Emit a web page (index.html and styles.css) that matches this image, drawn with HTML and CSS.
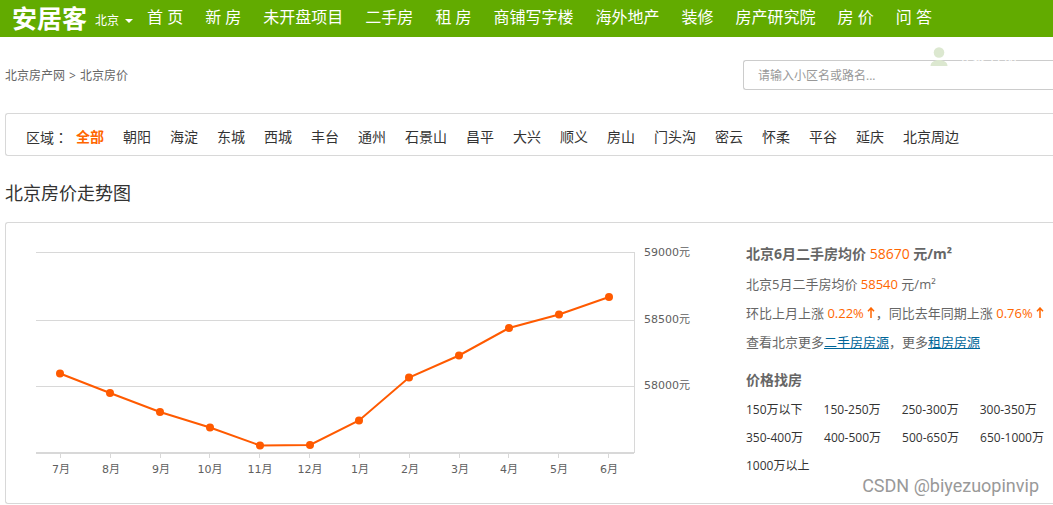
FILE: index.html
```html
<!DOCTYPE html>
<html lang="zh-CN">
<head>
<meta charset="utf-8">
<title>北京房价</title>
<link rel="stylesheet" href="styles.css">
</head>
<body>
<header class="header">
  <a class="logo" href="#">安居客</a>
  <button class="city" type="button">北京<span class="caret"></span></button>
  <nav class="nav">
    <a href="#">首 页</a><a href="#">新 房</a><a href="#">未开盘项目</a><a href="#">二手房</a><a href="#">租 房</a><a href="#">商铺写字楼</a><a href="#">海外地产</a><a href="#">装修</a><a href="#">房产研究院</a><a href="#">房 价</a><a href="#">问 答</a>
  </nav>
</header>
<main class="page">
  <div class="toolbar">
    <div class="crumbs"><a href="#">北京房产网</a><span>&gt;</span><a href="#">北京房价</a></div>
    <form class="search">
      <input class="search-input" type="text" aria-label="搜索小区" placeholder="请输入小区名或路名...">
      <div class="account">
        <svg class="account-icon" viewBox="0 0 18 19" aria-hidden="true"><circle cx="9" cy="5.500" r="5.300"/><path d="M0.500 19C0.500 15.500 4 13 9 13s8.500 2.500 8.500 6z"/></svg>
        <span>登录 注册</span>
      </div>
    </form>
  </div>
  <section class="panel regions">
    <span class="regions-label">区域<span class="colon" lang="zh-TW">：</span></span>
    <a class="active" href="#">全部</a><a href="#">朝阳</a><a href="#">海淀</a><a href="#">东城</a><a href="#">西城</a><a href="#">丰台</a><a href="#">通州</a><a href="#">石景山</a><a href="#">昌平</a><a href="#">大兴</a><a href="#">顺义</a><a href="#">房山</a><a href="#">门头沟</a><a href="#">密云</a><a href="#">怀柔</a><a href="#">平谷</a><a href="#">延庆</a><a href="#">北京周边</a>
  </section>
  <h1 class="title">北京房价走势图</h1>
  <section class="panel trend">
    <svg class="chart" viewBox="0 0 670 240" role="img" aria-label="北京房价走势图">
      <g class="grid">
        <path d="M0 9.500H599M0 77.500H599M0 143.500H599M598.500 10V210"/>
        <path class="axis" d="M0 210H598"/>
        <path d="M24.500 211v4M74.500 211v4M124.500 211v4M173.500 211v4M223.500 211v4M273.500 211v4M323.500 211v4M373.500 211v4M423.500 211v4M472.500 211v4M522.500 211v4M572.500 211v4"/>
      </g>
      <polyline class="line" points="24,130.500 74,150 124,169 174,184.500 224,202.500 274,202 323,177.500 373,134.500 423,112.500 473,85 523,71.500 573,54"/>
      <g class="dots">
        <circle cx="24" cy="130.500" r="4"/><circle cx="74" cy="150" r="4"/><circle cx="124" cy="169" r="4"/><circle cx="174" cy="184.500" r="4"/><circle cx="224" cy="202.500" r="4"/><circle cx="274" cy="202" r="4"/><circle cx="323" cy="177.500" r="4"/><circle cx="373" cy="134.500" r="4"/><circle cx="423" cy="112.500" r="4"/><circle cx="473" cy="85" r="4"/><circle cx="523" cy="71.500" r="4"/><circle cx="573" cy="54" r="4"/>
      </g>
      <g class="label">
        <text x="608" y="13">59000元</text><text x="608" y="80">58500元</text><text x="608" y="146">58000元</text>
      </g>
      <g class="label month">
        <text x="25" y="230">7月</text><text x="75" y="230">8月</text><text x="125" y="230">9月</text><text x="174" y="230">10月</text><text x="224" y="230">11月</text><text x="274" y="230">12月</text><text x="324" y="230">1月</text><text x="374" y="230">2月</text><text x="424" y="230">3月</text><text x="473" y="230">4月</text><text x="523" y="230">5月</text><text x="573" y="230">6月</text>
      </g>
    </svg>
    <div class="summary">
      <h2 class="average">北京6月二手房均价 <em>58670</em> 元/m²</h2>
      <p>北京5月二手房均价 <em>58540</em> 元/m²</p>
      <p>环比上月上涨 <em>0.22%<svg class="arrow" viewBox="0 0 12 11" aria-hidden="true"><path d="M7 11V1M4 4.200L7 1l3 3.200"/></svg></em>，同比去年同期上涨 <em>0.76%<svg class="arrow" viewBox="0 0 12 11" aria-hidden="true"><path d="M7 11V1M4 4.200L7 1l3 3.200"/></svg></em></p>
      <p>查看北京更多<a href="#">二手房房源</a>，更多<a href="#">租房房源</a></p>
      <h2 class="find">价格找房</h2>
      <div class="prices">
        <a href="#">150万以下</a><a href="#">150-250万</a><a href="#">250-300万</a><a href="#">300-350万</a><a href="#">350-400万</a><a href="#">400-500万</a><a href="#">500-650万</a><a href="#">650-1000万</a><a href="#">1000万以上</a>
      </div>
    </div>
    <div class="watermark">CSDN @biyezuopinvip</div>
  </section>
</main>
</body>
</html>
```
FILE: styles.css
```css
* { box-sizing: border-box; }
body {
  margin: 0;
  background: #fff;
  color: #333;
  font: 12px/18px "Open Sans", "Noto Sans CJK SC", sans-serif;
  overflow-x: hidden;
}
a { color: inherit; text-decoration: none; }
h1, h2, p { margin: 0; font-weight: 400; }
em { font-style: normal; color: #f60; font-weight: 400; }

.header {
  display: flex;
  align-items: center;
  height: 37px;
  padding-left: 12px;
  background: #62ab00;
  color: #fff;
  white-space: nowrap;
}
.logo { width: 76px; padding-bottom: 2px; font-size: 25px; line-height: 32px; font-weight: 700; }
.city {
  display: flex;
  align-items: center;
  gap: 6px;
  width: 59px;
  margin-top: 4px;
  padding: 0 0 0 7px;
  border: 0;
  background: none;
  color: inherit;
  font: inherit;
}
.caret {
  border: 4px solid transparent;
  border-top-color: #fff;
  border-bottom: 0;
}
.nav { display: flex; gap: 22px; padding-bottom: 3px; font-size: 16px; line-height: 24px; }

.page { padding-left: 5px; }
.toolbar {
  display: flex;
  justify-content: space-between;
  align-items: center;
  padding-top: 23px;
  color: #666;
}
.crumbs { display: flex; gap: 4px; padding-top: 2px; }
.search { position: relative; width: 310px; }
.search-input {
  display: block;
  width: 100%;
  height: 30px;
  padding: 1px 14px 0;
  border: 1px solid #ccc;
  border-right: 0;
  border-radius: 3px 0 0 3px;
  font: inherit;
  color: #333;
}
.search-input::placeholder { color: #999; opacity: 1; }
.account {
  position: absolute;
  left: 187px;
  top: -13px;
  display: flex;
  gap: 10px;
  color: #fff;
  font-size: 14px;
}
.account-icon { width: 18px; height: 19px; fill: #dce8d0; }

.panel { border: 1px solid #d8d8d8; border-right: 0; border-radius: 3px 0 0 3px; }
.regions {
  display: flex;
  gap: 19px;
  margin-top: 23px;
  padding: 13px 20px 7px;
  font-size: 14px;
  line-height: 20px;
  white-space: nowrap;
}
.regions-label { width: 31px; }
.colon { font-family: "Noto Sans CJK TC", sans-serif; }
.active { color: #f60; font-weight: 700; }
.title { padding: 23px 0 15px; font-size: 18px; line-height: 28px; }

.trend {
  position: relative;
  display: flex;
  gap: 40px;
  padding: 20px 0 20px 30px;
}
.chart { flex: none; width: 670px; height: 240px; }
.grid { fill: none; stroke: #d8d8d8; }
.axis { stroke-width: 2; }
.line { fill: none; stroke: #ff5a00; stroke-width: 2; }
.dots { fill: #ff5a00; }
.label { fill: #606060; font: 11px "DejaVu Sans", "Noto Sans CJK SC", sans-serif; }
.month { text-anchor: middle; }

.summary { color: #666; font-size: 13px; line-height: 29px; white-space: nowrap; }
.summary p a { color: #069; text-decoration: underline; }
.average, .find { font-size: 14px; font-weight: 700; }
.average { line-height: 22px; padding-bottom: 5px; }
.find { padding: 8px 0 2px; }
.arrow { width: 12px; height: 11px; fill: none; stroke: #f60; stroke-width: 1.5; }
.prices {
  display: flex;
  flex-wrap: wrap;
  column-gap: 21px;
  color: #333;
  font-size: 12px;
  line-height: 28px;
}
.watermark {
  position: absolute;
  right: 14px;
  bottom: 6px;
  color: #999;
  font: 18px/22px Roboto, sans-serif;
}
```
